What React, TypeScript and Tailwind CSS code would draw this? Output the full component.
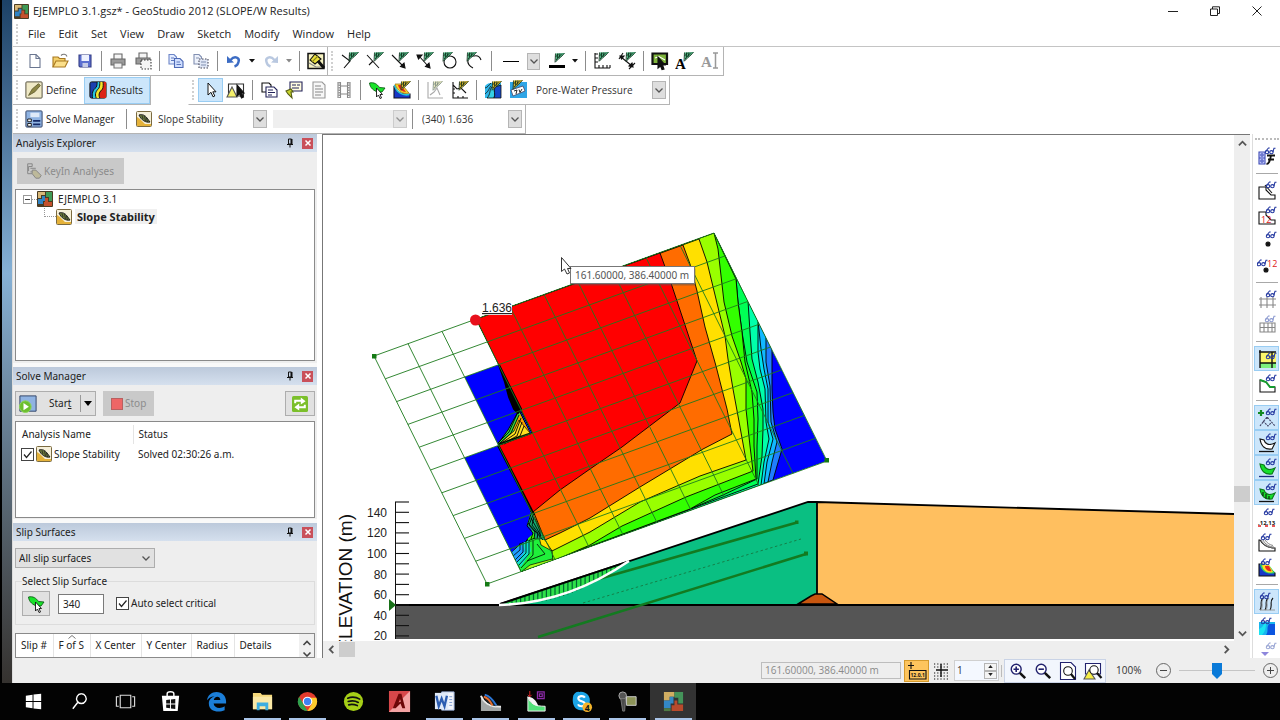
import React from "react";

type Pt = [number, number];
const pts = (list: Pt[]) => list.map((p) => p.join(",")).join(" ");

/* ---------- small drawing helpers ---------- */

function Icon({ children, size = "size-5" }: { children: React.ReactNode; size?: string }) {
  return (
    <svg viewBox="0 0 20 20" className={`${size} shrink-0`} fill="none" stroke="#111" strokeWidth="1.1" aria-hidden="true">
      {children}
    </svg>
  );
}

function Pen({ x = 8, y = 0, fill = "#4fb583" }: { x?: number; y?: number; fill?: string }) {
  return (
    <g transform={`translate(${x} ${y})`}>
      <path d="M1.5 1.5L11 1L8 4L5 6.5L1.5 10Z" fill={fill} stroke="none" />
      <path d="M1.5 1.5L1 10.5M1.5 10L5 6.5L8 4L10.5 1M3.5 1.5L3.5 6M6 1.5L5 5.5M1.5 5L5 1.5M2 8L8 1.5" stroke="#0c2a18" strokeWidth="0.8" />
    </g>
  );
}

function Glasses({ x = 9, y = 0, color = "#2438a0" }: { x?: number; y?: number; color?: string }) {
  return (
    <g transform={`translate(${x} ${y})`} stroke={color} strokeWidth="1.1" fill="none">
      <ellipse cx="2" cy="5.2" rx="1.7" ry="1.6" />
      <ellipse cx="6.4" cy="5.2" rx="1.7" ry="1.6" />
      <path d="M.5 4.5L3.5 1H4.700M7.900 5L9 1.200H10.500" />
    </g>
  );
}

function Pointer() {
  return <path d="M7 3V15L10 12.3L12 16.8L13.8 16L11.8 11.8H15Z" fill="#fff" strokeWidth="1" />;
}

function GeoLogo({ size = "size-4" }: { size?: string }) {
  return (
    <svg viewBox="0 0 16 16" className={`${size} shrink-0`} aria-hidden="true">
      <rect width="16" height="16" rx="1" fill="#4a3b22" />
      <path d="M1 1H8V4H4V7H1Z" fill="#d8b878" />
      <path d="M9 1H15V10H12V6H9Z" fill="#3f9a56" />
      <path d="M1 8H5V5H8V10H6V13H1Z" fill="#2f83c5" />
      <path d="M8 7H11V11H15V15H7V11H8Z" fill="#c4502c" />
    </svg>
  );
}

function SlopeIcon({ size = "size-4" }: { size?: string }) {
  return (
    <svg viewBox="0 0 16 16" className={`${size} shrink-0`} aria-hidden="true">
      <rect x=".5" y=".5" width="15" height="15" rx="1" fill="#f6f0da" stroke="#7a6a40" />
      <path d="M1 6L4 8L9 13H15V15H1Z" fill="#e5b23a" />
      <path d="M3 4C6 3 9 4 11 7L14 11C10 12 5 9 3 4Z" fill="#6b7a3c" stroke="#222" />
      <path d="M6 4.500L7 8M8.500 5L9.500 10M10.500 7L11.500 11" stroke="#1c1c1c" strokeWidth=".7" />
    </svg>
  );
}

function SlipFish() {
  return (
    <Icon>
      <path d="M2.500 3C7 2 10 4 12.500 7.500L18 8L15 12L11 12C7 11 3 8 2.500 3Z" fill="#19e32a" stroke="#0c5f16" strokeWidth=".9" />
      <path d="M9.500 8V17L11.500 15L13 18.500L14.500 18L13 14.500H15.500Z" fill="#fff" strokeWidth=".9" />
    </Icon>
  );
}

const Chevron = () => (
  <svg viewBox="0 0 10 10" className="size-2.5" fill="none" stroke="#555" strokeWidth="1.300" aria-hidden="true">
    <path d="M1.500 3.500L5 7L8.500 3.500" />
  </svg>
);

/* ---------- toolbar parts ---------- */

const Grip = () => <span className="mx-[3px] h-5 w-[3px] shrink-0 border-l-2 border-dotted border-[#d0d0d0]" />;
const Sep = () => (
  <span className="flex w-2 shrink-0 justify-center">
    <span className="h-5 w-px bg-[#8c8c8c]" />
  </span>
);

function Tool({ label, active, children }: { label: string; active?: boolean; children: React.ReactNode }) {
  return (
    <button
      type="button"
      aria-label={label}
      className={`flex h-6 w-[25px] shrink-0 items-center justify-center ${active ? "border border-[#99cdf3] bg-[#cce6fb]" : ""}`}
    >
      <Icon>{children}</Icon>
    </button>
  );
}

function More({ label, dim }: { label: string; dim?: boolean }) {
  return (
    <button type="button" aria-label={label} className="flex h-6 w-3 shrink-0 items-center justify-center">
      <svg viewBox="0 0 6 4" className="h-1 w-1.5" aria-hidden="true">
        <path d="M0 0H6L3 3.500Z" fill={dim ? "#888" : "#111"} />
      </svg>
    </button>
  );
}

function Combo({ label, value, className, disabled }: { label: string; value: string; className: string; disabled?: boolean }) {
  return (
    <span className={`relative flex h-[18px] shrink-0 items-center ${className} ${disabled ? "bg-[#efefef]" : ""}`}>
      <select
        aria-label={label}
        disabled={disabled}
        className="h-full w-full appearance-none bg-transparent pl-1.5 text-[10px] text-[#333] outline-none"
      >
        <option>{value}</option>
      </select>
      <span className={`pointer-events-none absolute right-0 top-0 flex h-[18px] w-3.5 items-center justify-center border border-[#b5b5b5] bg-[#dedede] ${disabled ? "opacity-60" : ""}`}>
        <Chevron />
      </span>
    </span>
  );
}

const bar = "flex h-[29px] items-center border-b border-r border-[#b4b4b4] bg-white";

function Toolbars() {
  return (
    <div className="flex flex-col items-start text-[10px]">
      <div className="flex">
        <div className={`${bar} w-[315px]`}>
          <Grip />
          <Tool label="New">
            <path d="M5 3.500H11L15 7.500V16.500H5Z" fill="#fff" stroke="#6a7690" />
            <path d="M11 3.500V7.500H15" stroke="#6a7690" />
          </Tool>
          <Tool label="Open">
            <path d="M3 16V6H8L9.500 7.500H15V10" fill="#f3d06b" stroke="#a87820" />
            <path d="M3 16L6 10H18L15 16Z" fill="#fbdf8a" stroke="#a87820" />
            <path d="M11 4.500C13 2.500 16 3 17 5.500" stroke="#777" />
          </Tool>
          <Tool label="Save">
            <path d="M4 4H16V16H5L4 15Z" fill="#5b6fd0" stroke="#353f86" />
            <path d="M6.500 4H14V10H6.500Z" fill="#eef2ff" stroke="none" />
            <path d="M7.500 12H13V16H7.500Z" fill="#c5cbe6" stroke="none" />
          </Tool>
          <Sep />
          <Tool label="Print">
            <path d="M6 8V3H14V8" fill="#f5f5f5" stroke="#666" />
            <path d="M3 8H17V14H3Z" fill="#9a9a9a" stroke="#666" />
            <path d="M6 12H14V17H6Z" fill="#f0f0f0" stroke="#777" />
          </Tool>
          <Tool label="Print area">
            <path d="M6 7V2H14V7" fill="#f5f5f5" stroke="#666" />
            <path d="M3 7H17V13H3Z" fill="#9a9a9a" stroke="#666" />
            <path d="M8 9H18V18H8Z" fill="#f4f4f4" stroke="#333" strokeDasharray="1.500 1.500" />
          </Tool>
          <Sep />
          <Tool label="Copy">
            <path d="M3 3.500H8L10.500 6V13H3Z" fill="#e3ecff" stroke="#6d86c8" />
            <path d="M8.500 7.500H14L17 10.500V16.500H8.500Z" fill="#cfdeff" stroke="#4d69b5" />
            <path d="M5 7H8M5 9.500H8M10.500 11H14M10.500 13.500H15" stroke="#5d77bd" />
          </Tool>
          <Tool label="Copy area">
            <path d="M3 3.500H8L10.500 6V13H3Z" fill="#eef2fb" stroke="#8290b2" />
            <path d="M8 8H17V17H8Z" fill="#dfe6f5" stroke="#445" strokeDasharray="1.500 1.500" />
            <path d="M5 7H8M10 11H15M10 14H15" stroke="#8290b2" />
          </Tool>
          <Sep />
          <Tool label="Undo">
            <path d="M6.500 9C11 4 16 7 14.500 11C14 13.500 12 15 10.500 15.500" stroke="#3c6cc4" strokeWidth="2.400" />
            <path d="M3 5V12L10 11.500Z" fill="#3c6cc4" stroke="none" />
          </Tool>
          <More label="Undo list" />
          <Tool label="Redo">
            <path d="M13.500 9C9 4 4 7 5.500 11C6 13.500 8 15 9.500 15.500" stroke="#b9c8e0" strokeWidth="2.400" />
            <path d="M17 5V12L10 11.500Z" fill="#b9c8e0" stroke="none" />
          </Tool>
          <More label="Redo list" dim />
          <Sep />
          <Tool label="Page setup">
            <path d="M2 2.500H18V17.500H2Z" fill="#f6f2c0" strokeWidth="1.500" />
            <path d="M3 12L10 16L16 16" stroke="#888" />
            <path d="M4 9L9 3L15 8L9 13Z" fill="#e9df3a" />
            <path d="M6 11L12 5" stroke="#8c861c" />
            <path d="M12 10L18 17" strokeWidth="3" />
          </Tool>
        </div>
        <div className={`${bar} pr-px`}>
          <Grip />
          <Tool label="Sketch lines"><path d="M2 4L10 10L4 17M10 10V4" /><Pen /></Tool>
          <Tool label="Sketch polyline"><path d="M2 4L14 17M8 10L4 14" /><Pen /></Tool>
          <Tool label="Sketch arrow"><path d="M2 4L13 15" /><path d="M15 17L10.500 15.500L14 12Z" fill="#111" /><Pen /></Tool>
          <Tool label="Sketch double arrow"><path d="M4 5L13 15" /><path d="M2 4L7 4L3.500 8ZM15 17L10.500 15.500L14 12Z" fill="#111" /><Pen /></Tool>
          <Tool label="Sketch circle"><circle cx="10" cy="11" r="6" /><Pen x={2} /></Tool>
          <Tool label="Sketch arc"><path d="M8 17C0 13 2 4 9 5C13 4 15 6 16 9" /><Pen x={1} /></Tool>
          <Sep />
          <span className="flex w-8 items-center justify-center"><span className="h-px w-4 bg-black" /></span>
          <button type="button" aria-label="Line style" className="flex h-[17px] w-[13px] items-center justify-center border border-[#b5b5b5] bg-[#dedede]"><Chevron /></button>
          <span className="w-1" />
          <Tool label="Line colour"><path d="M2 14H18V17H2Z" fill="#000" stroke="none" /><Pen x={7} y={1} /></Tool>
          <More label="Line colours" />
          <Sep />
          <Tool label="Sketch axes"><path d="M3 2V17H18M3 3H6M3 7H6M3 11H6M7 17V14M11 17V14M15 17V14M18 17V14" /><Pen x={6} /></Tool>
          <Tool label="Dimension"><path d="M4 6L15 15M2 8L6 2M12 18L18 12" /><path d="M3 5L7 5L4.500 8ZM16 16L12 15L15 12Z" fill="#111" /><Pen x={8} /></Tool>
          <Sep />
          <Tool label="Modify picture"><path d="M2.500 2.500H17V13H2.500Z" fill="#7fb53c" strokeWidth="2.200" /><path d="M5 7L9 5.500L15 9" stroke="#fff" /><path d="M8 6V17L10.500 15L12 18.500L14 18L12.500 14H15Z" fill="#111" /></Tool>
          <Tool label="Sketch text"><text x="0" y="18" fontSize="15" fontWeight="700" fill="#000" stroke="none" className="font-['Liberation_Serif',serif]">A</text><Pen /></Tool>
          <Tool label="Modify text"><text x="1" y="16" fontSize="15" fontWeight="700" fill="#999" stroke="none" className="font-['Liberation_Serif',serif]">A</text><path d="M13 2H18M15.500 2V17M13 17H18" stroke="#999" strokeWidth="1.500" /></Tool>
        </div>
      </div>

      <div className="flex">
        <div className={`${bar} w-[138px]`}>
          <Grip />
          <button type="button" className="flex h-6 w-[62px] items-center gap-[3px] pl-[3px]">
            <Icon size="size-[18px]">
              <rect x="1" y="1" width="18" height="18" rx="1" fill="#efe9c6" stroke="#55523f" />
              <path d="M4 16L8 9L15 3L17 5L11 12Z" fill="#8c8644" stroke="#6b6638" />
            </Icon>
            Define
          </button>
          <button type="button" className="flex h-[27px] w-[67px] items-center gap-[3px] border border-[#99cdf3] bg-[#cce6fb] pl-1">
            <Icon size="size-[18px]">
              <rect x="1" y="1" width="18" height="18" rx="2" fill="#1b3fb0" />
              <path d="M4 19C3 14 4 10 8 7C9 5 9 3 9 1H19V19Z" fill="#2ac7e0" stroke="none" />
              <path d="M8 19C6 14 8 11 11 8C12 6 12 3 12 1H19V19Z" fill="#f4e62a" stroke="none" />
              <path d="M12 19C10 14 12 12 15 9C16 7 16 3 15.500 1H19V19Z" fill="#dc2417" stroke="none" />
              <path d="M4 19C3 14 4 10 8 7C9 5 9 3 9 1M8 19C6 14 8 11 11 8C12 6 12 3 12 1M12 19C10 14 12 12 15 9C16 7 16 3 15.500 1" />
            </Icon>
            Results
          </button>
        </div>
        <span className="w-[37px]" />
        <div className={`${bar} border-l border-l-transparent`}>
          <Grip />
          <Tool label="Select" active><Pointer /></Tool>
          <Tool label="Select region"><path d="M2.500 4H17.500V16H2.500Z" fill="#fff" stroke="#333" /><path d="M1 17L6 7L11 17Z" fill="#f5f06a" stroke="#555" /><path d="M11 5V16L13.500 13.500L15.500 18L17.500 17L15.500 13H18Z" fill="#111" /></Tool>
          <Sep />
          <Tool label="Report"><path d="M3 3H10L12 5V12H3Z" fill="#fff" /><path d="M7 7H15L18 10V17H7Z" fill="#fff" stroke="#23235a" /><path d="M9 10H14M9 12.500H16M9 15H13" stroke="#23235a" /></Tool>
          <Tool label="View information"><path d="M6 2H18V11H6Z" fill="#fffbe0" stroke="#23235a" /><path d="M8 5H12M13 5H16M8 8H15" stroke="#23235a" /><path d="M2 11L7 9L9 12H7L8 18L4 14Z" fill="#c7d42f" stroke="#555c11" /></Tool>
          <Tool label="View summary"><path d="M4 2H13L16 5V18H4Z" fill="#f7f7f7" stroke="#999" /><path d="M6 6H12M6 9H14M6 12H14M6 15H12" stroke="#888" /></Tool>
          <Tool label="Animation"><path d="M4 2V18M16 2V18M6.500 2V18M13.500 2V18M6.500 6H13.500M6.500 14H13.500" stroke="#888" /><path d="M5.200 2V18M14.800 2V18" stroke="#999" strokeWidth="2" strokeDasharray="1.500 1" /></Tool>
          <Sep />
          <button type="button" aria-label="Select slip surface" className="flex h-6 w-[25px] items-center justify-center"><SlipFish /></button>
          <Tool label="Safety map"><path d="M2 6C4 13 9 15 18 14V18H2Z" fill="#1737c8" stroke="#112" /><path d="M2.500 5C4 12 10 16 17.500 14.500" stroke="#26c6d8" strokeWidth="1.600" /><path d="M3 4H9C12 6 14 10 17 13C10 15 5 10 3 4Z" fill="#f5d929" stroke="#a0761a" strokeWidth=".8" /><path d="M6 5H9L14 12C10 12 7 9 6 5Z" fill="#e82a1c" stroke="none" /><Pen x={8} fill="#d9b52c" /></Tool>
          <Sep />
          <Tool label="Graph"><path d="M3 2V18H18M5 15L9 12L12 8L15 15" stroke="#aaa" /><g opacity=".55"><Pen x={7} fill="#d8d890" /></g></Tool>
          <Tool label="Slice forces"><path d="M3 2V18H18M3 5L7 9L11 8L16 13" /><path d="M3 9H5M3 13H5M8 18V16M13 18V16" /><Pen x={8} fill="#d9b52c" /></Tool>
          <Sep />
          <Tool label="Contours"><path d="M2 6C5 2 8 3 18 3V18H2Z" fill="#2fb7ea" stroke="none" /><path d="M9 7C6 10 8 14 4 18H11C13 14 10 11 12 7Z" fill="#35d0e6" strokeWidth=".8" /><path d="M12 7C10 11 13 14 11 18H18V5Z" fill="#1348c8" strokeWidth=".8" /><path d="M2 8C4 8 6 5 8 3M2 14C6 11 6 8 8 6" strokeWidth=".8" /><Pen x={8} fill="#d9b52c" /></Tool>
          <Tool label="Contour labels"><path d="M2 2H19V18H2Z" fill="#2fa5e6" stroke="none" /><path d="M3 10L15 6L17 11L5 16Z" fill="#fff" stroke="#446" strokeWidth=".8" /><path d="M6 11L9 10L8 14M11 9.500L12 12.500L14 9" strokeWidth=".9" /><Pen x={4} y={-1} fill="#d9b52c" /></Tool>
          <Combo label="Contour parameter" value="Pore-Water Pressure" className="mr-[3px] w-[136px]" />
        </div>
      </div>

      <div className={`${bar}`}>
        <Grip />
        <button type="button" className="flex h-6 w-[100px] items-center gap-[3px] pl-[3px]">
          <Icon size="size-[18px]">
            <rect x="1" y="1" width="18" height="18" rx="1" fill="#8fb3e2" stroke="#36486b" />
            <path d="M3 10H7V13H3ZM3 15H7V18H3Z" fill="#fff" strokeWidth="1" />
            <path d="M9 12H17M9 16H17" stroke="#142a66" strokeWidth="2" />
            <path d="M6 3H16V8H6Z" fill="#dfeaf8" stroke="none" />
          </Icon>
          Solve Manager
        </button>
        <Sep />
        <span className="w-1.5" />
        <SlopeIcon />
        <Combo label="Analysis" value="Slope Stability" className="w-[115px]" />
        <span className="w-1.5" />
        <Combo label="Time step" value="" className="w-[134px]" disabled />
        <span className="w-px" />
        <Sep />
        <Combo label="Slip surface result" value="(340) 1.636" className="mr-[3px] w-[106px]" />
      </div>
    </div>
  );
}

/* ---------- left docked panels ---------- */

function PanelHeader({ title }: { title: string }) {
  return (
    <header className="flex h-[18px] shrink-0 items-center bg-linear-to-b from-[#bcc9db] to-[#d5e0ee] px-[3px] text-[#222]">
      <h2 className="flex-1">{title}</h2>
      <button type="button" aria-label={`Pin ${title}`} className="mr-2">
        <svg viewBox="0 0 8 10" className="h-2.5 w-2" fill="none" stroke="#111" aria-hidden="true">
          <path d="M2.500 1H5.500V6H2.500ZM1 6.500H7M4 6.500V9.500" /><path d="M5.500 1V6" strokeWidth="2" />
        </svg>
      </button>
      <button type="button" aria-label={`Close ${title}`} className="mr-px flex size-[11px] items-center justify-center bg-[#c9505a]">
        <svg viewBox="0 0 8 8" className="size-2" stroke="#fff" strokeWidth="1.500" aria-hidden="true"><path d="M1.500 1.500L6.500 6.500M6.500 1.500L1.500 6.500" /></svg>
      </button>
    </header>
  );
}

function Tick({ id, label }: { id: string; label?: string }) {
  return (
    <span className="relative inline-flex size-[13px] shrink-0">
      <input id={id} type="checkbox" defaultChecked aria-label={label} className="size-[13px] appearance-none border border-[#444] bg-white" />
      <svg viewBox="0 0 13 13" className="pointer-events-none absolute inset-0" fill="none" stroke="#222" strokeWidth="1.200" aria-hidden="true"><path d="M3 6.500L5.500 9.500L10.500 3.500" /></svg>
    </span>
  );
}

function Sidebar() {
  const cols: [string, string][] = [["Slip #", "w-[37px]"], ["F of S", "w-[37px]"], ["X Center", "w-[51px]"], ["Y Center", "w-[50px]"], ["Radius", "w-[43px]"], ["Details", "w-16"]];
  return (
    <aside className="flex w-[304px] shrink-0 flex-col bg-[#f9f9f9] font-['Noto_Sans',sans-serif] text-[10px] text-[#222]">
      <PanelHeader title="Analysis Explorer" />
      <section className="bg-[#eee] px-0.5 pb-0.5 pt-1.5">
        <button type="button" disabled className="ml-0.5 flex h-[26px] w-[107px] items-center gap-px bg-[#c9c9c9] pl-2 text-[#8c8c8c]">
          <Icon size="size-[18px]"><path d="M3 2H8V5H4V10M6 7H12M6 11H12M3 2V13H8" stroke="#888" /><path d="M8 9L12 9L18 15L16 18H12L8 13Z" fill="#bdb99a" stroke="#888" /></Icon>
          KeyIn Analyses
        </button>
        <ul className="mt-[5px] h-[172px] border border-[#8a8a8a] bg-white pl-[7px]">
          <li className="flex h-[18px] items-center">
            <span className="flex size-[9px] items-center justify-center border border-[#999]"><span className="h-px w-[5px] bg-[#444]" /></span>
            <span className="w-[5px] border-t border-dotted border-[#999]" />
            <GeoLogo />
            <span className="ml-[5px]">EJEMPLO 3.1</span>
          </li>
          <li className="ml-[21px] flex h-[17px] items-center">
            <span className="h-[17px] w-3 self-start"><span className="block h-[9px] border-b border-l border-dotted border-[#999]" /></span>
            <SlopeIcon />
            <strong className="ml-[3px] bg-[#f0f0f0] px-0.5 text-[11px] leading-[15px]">Slope Stability</strong>
          </li>
        </ul>
      </section>
      <span className="h-1" />

      <PanelHeader title="Solve Manager" />
      <section className="bg-[#eee] px-0.5 pb-px pt-1.5">
        <div className="flex items-center">
          <div className="flex h-[25px] w-[81px] items-center border border-[#adadad] bg-[#e1e1e1]">
            <button type="button" className="flex h-full w-16 items-center gap-3 pl-[3px]">
              <Icon size="size-[18px]"><path d="M1 1H19V18H1Z" fill="#8fb3e2" stroke="#36486b" /><circle cx="7" cy="13" r="6.500" fill="#6cbf2e" stroke="#8fd45a" /><path d="M5 9L11 13L5 17Z" fill="#fff" stroke="none" /></Icon>
              <span>Star<u>t</u></span>
            </button>
            <button type="button" aria-label="Start options" className="my-1 flex h-[17px] flex-1 items-center justify-center border-l border-[#999]"><svg viewBox="0 0 8 5" className="h-[5px] w-2" aria-hidden="true"><path d="M0 0H8L4 5Z" /></svg></button>
          </div>
          <button type="button" disabled className="ml-[7px] flex h-[25px] w-[51px] items-center gap-0.5 bg-[#c9c9c9] pl-2 text-[#8c8c8c]">
            <span className="size-3 border border-[#b86060] bg-[#ee6666]" />
            Stop
          </button>
          <button type="button" aria-label="Refresh" className="ml-auto flex h-[25px] w-[30px] items-center justify-center border border-[#adadad] bg-[#e1e1e1]">
            <Icon size="size-4"><rect width="20" height="20" rx="2" fill="#7bbf2a" stroke="none" /><path d="M4 9V6H13M16 11V14H7" stroke="#fff" strokeWidth="2.500" /><path d="M11 2L17 6.500L11 10.500ZM9 9.500L3 14L9 18Z" fill="#fff" stroke="none" /></Icon>
          </button>
        </div>
        <div className="mt-[5px] h-[97px] border border-[#8a8a8a] bg-white px-[5px] pt-[3px]">
          <table className="w-full table-fixed text-left">
            <thead>
              <tr className="h-[19px]">
                <th className="w-[112px] border-r border-[#e4e4e4] pl-px font-normal">Analysis Name</th>
                <th className="pl-[5px] font-normal">Status</th>
              </tr>
            </thead>
            <tbody>
              <tr className="h-5">
                <td className="-ml-px"><span className="flex items-center gap-[2px]"><Tick id="solve-slope" label="Solve Slope Stability" /><SlopeIcon />Slope Stability</span></td>
                <td className="pl-[5px]">Solved 02:30:26 a.m.</td>
              </tr>
            </tbody>
          </table>
        </div>
      </section>
      <span className="h-1" />

      <PanelHeader title="Slip Surfaces" />
      <section className="flex min-h-0 flex-1 flex-col overflow-hidden bg-[#eee] px-0.5 pt-[7px]">
        <span className="relative block h-5 w-[140px] shrink-0 border border-[#adadad] bg-[#e1e1e1]">
          <select aria-label="Slip surface filter" className="h-full w-full appearance-none bg-transparent pl-[3px] outline-none"><option>All slip surfaces</option></select>
          <span className="pointer-events-none absolute right-[3px] top-1"><Chevron /></span>
        </span>
        <fieldset className="mt-[5px] h-[52px] shrink-0 border border-[#dcdcdc] px-1.5">
          <legend className="bg-[#eee] leading-4">Select Slip Surface</legend>
          <div className="flex items-center pt-0.5">
            <button type="button" aria-label="Pick slip surface" className="flex h-[25px] w-7 items-center justify-center border border-[#adadad] bg-[#e1e1e1]"><SlipFish /></button>
            <input aria-label="Slip surface number" defaultValue="340" className="ml-2 h-5 w-[46px] border border-[#7a7a7a] bg-white pl-1 outline-none" />
            <span className="ml-3 flex items-center gap-0.5"><Tick id="auto" /><label htmlFor="auto">Auto select critical</label></span>
          </div>
        </fieldset>
        <div className="mt-2 flex min-h-0 flex-1 border border-[#8a8a8a] bg-white">
          <table className="h-full text-left">
            <thead>
              <tr>
                {cols.map(([c, w]) => (
                  <th key={c} className={`${w} relative whitespace-nowrap border-r border-[#e4e4e4] p-0 pl-[5px] font-normal last:border-0`}>
                    {c === "F of S" && <svg viewBox="0 0 8 4" className="absolute left-[14px] top-px h-1 w-2" fill="none" stroke="#777" aria-hidden="true"><path d="M.500 3.500L4 .500L7.500 3.500" /></svg>}
                    {c}
                  </th>
                ))}
              </tr>
            </thead>
          </table>
          <div className="ml-auto flex w-[15px] flex-col items-center justify-between bg-[#f0f0f0]">
            <svg viewBox="0 0 10 10" className="mt-1 size-2.5" fill="none" stroke="#444" strokeWidth="1.600" aria-hidden="true"><path d="M1.500 7L5 3.500L8.500 7" /></svg>
            <svg viewBox="0 0 10 6" className="h-1.5 w-2.5" fill="none" stroke="#444" strokeWidth="1.600" aria-hidden="true"><path d="M1.500 1.500L5 5L8.500 1.500" /></svg>
          </div>
        </div>
      </section>
    </aside>
  );
}

/* ---------- slope model drawing ---------- */

// Search grid: i runs along the top edge, j runs down the slope.
const g = (i: number, j: number): Pt => [374 + 34 * i + 11.3 * j, 357 - 12.3 * i + 22.8 * j];

const leftEdge: Pt[] = [g(2, 5), g(3, 5), g(3, 0)];
const peak = g(10, 0);

const contours: { fill: string; line: Pt[] }[] = [
  { fill: "#1f7dff", line: [peak, [772, 350], [772, 390], [773, 413], [775, 430], [782, 450], [777, 467], [773, 481], [521, 573]] },
  { fill: "#11b8ff", line: [peak, [766, 338], [766, 363], [770, 387], [771, 423], [777, 443], [772, 463], [768, 483], [521, 573]] },
  { fill: "#00e0ee", line: [peak, [758, 322], [761, 350], [764, 370], [768, 390], [768, 423], [773, 440], [767, 463], [764, 485], [521, 573]] },
  { fill: "#00ffaa", line: [peak, [758, 322], [758, 353], [760, 370], [765, 390], [766, 423], [769, 440], [764, 463], [761, 486], [521, 573]] },
  { fill: "#00ff55", line: [peak, [748, 302], [750, 333], [752, 360], [758, 383], [763, 410], [763, 430], [762, 457], [758, 485], [521, 573]] },
  { fill: "#1dff22", line: [peak, [736, 280], [738, 303], [742, 333], [747, 363], [757, 393], [758, 420], [757, 447], [757, 480], [723, 496], [690, 510], [521, 573]] },
  { fill: "#33ff00", line: [peak, [736, 280], [738, 303], [742, 333], [745, 363], [752, 393], [754, 420], [754, 447], [756, 480], [715, 496], [690, 510], [521, 573]] },
  { fill: "#99ff00", line: [peak, [718, 250], [724, 303], [732, 337], [741, 363], [746, 380], [746, 410], [750, 447], [753, 472], [686, 498], [622, 527], [590, 546], [553, 562]] },
  { fill: "#ffe000", line: [[699, 240], [707, 263], [716, 300], [725, 337], [728, 360], [733, 390], [738, 417], [746, 461], [700, 477], [640, 503], [590, 533], [552, 552], [543, 543]] },
  { fill: "#ff6c00", line: [[683, 246], [690, 265], [697, 292], [705, 328], [716, 367], [727, 410], [732, 435], [703, 450], [640, 488], [590, 519], [560, 534], [545, 541]] },
  { fill: "#ff0000", line: [[660, 254], [672, 287], [684, 323], [697, 362], [680, 404], [622, 448], [590, 470], [560, 491], [533, 513]] },
];

function ModelView() {
  const outline: Pt[] = [g(3, 0), g(10, 0), g(10, 10), g(1, 10), g(1, 5), g(2, 5), g(2, 2), g(3, 2)];
  const steps = Array.from({ length: 11 }, (_, k) => k);
  const ticks = Array.from({ length: 14 }, (_, k) => 150 - 10 * k);
  const yOf = (elev: number) => 503 + (150 - elev) * 1.03;
  const slices = Array.from({ length: 26 }, (_, k) => 512 + k * 4.300);
  return (
    <svg viewBox="323 136 911 504" preserveAspectRatio="xMinYMin meet" className="block h-full w-full bg-white font-['Liberation_Sans',sans-serif]" role="img" aria-label="Slope model with factor of safety contours">
      <defs>
        <clipPath id="mapped"><polygon points={pts(outline)} /></clipPath>
      </defs>

      <g clipPath="url(#mapped)">
        <polygon points={pts(outline)} fill="#0000ff" />
        {contours.map(({ fill, line }) => (
          <polygon key={fill} points={pts([...line, g(2, 8), ...leftEdge])} fill={fill} stroke="#000" strokeWidth="0.9" />
        ))}
        <polygon points={pts([g(2, 2), g(3, 2), [510, 398], [512, 408], [509, 424], [497, 443]])} fill="#0000ff" />
        <polygon points={pts([g(1, 5), g(2, 5), [530, 510], [528, 520], [533, 535], [512, 553]])} fill="#0000ff" />
        <polygon points={pts([[530, 434], [519, 411], [508, 431], [497, 446]])} fill="#33e040" stroke="#000" />
        <polygon points={pts([[530, 434], [520, 415], [513, 431]])} fill="#ff9a00" />
        <polygon points={pts([[530, 434], [519, 421], [514, 432], [500, 444]])} fill="#ffdf20" stroke="#000" strokeWidth=".7" />
        <path d="M518 413L509 433L498 444M519 416L511 434L499 445M521 419L515 435L500 445M522 423L517 437L502 445M524 427L520 437L504 445" fill="none" stroke="#000" strokeWidth="0.9" />
        <path d="M499 366L505 383L509 398L514 410L518 414L521 410Z" fill="#000" stroke="#000" strokeWidth="2" />
        <path d="M498 446L534 516" stroke="#000" strokeWidth="2.500" />
        <polygon points={pts([[512, 553], [520, 545], [535, 539], [543, 541], [552, 552], [553, 562], [521, 573]])} fill="#1ff03a" stroke="#000" strokeWidth=".8" />
        <polygon points={pts([[512, 553], [524, 543], [527, 544], [524, 555], [517, 566]])} fill="#1f9dff" />
        <polygon points={pts([[522, 545], [529, 541], [531, 552], [521, 568], [517, 564], [525, 552]])} fill="#10e0c8" />
        <polygon points={pts([[521, 573], [530, 566], [552, 560], [553, 562]])} fill="#a8ff18" stroke="#000" strokeWidth=".7" />
        <polygon points={pts([[539, 538], [545, 541], [552, 552], [541, 546]])} fill="#ffe000" stroke="#000" strokeWidth=".7" />
        <path d="M520 544V551L513 557M523 543V553L515 561M526 542V554L517 563M529 541V555L519 566M533 541V556L521 569M537 545L545 555L527 562" fill="none" stroke="#000" strokeWidth="0.8" />
        <polygon points={pts([[531, 512], [534, 517], [545, 541], [536, 540], [533, 532], [527, 526]])} fill="#14a870" />
        <path d="M532 512L527 527L533 534L531 540M533 516L529 526L535 533L534 540M534 518L532 526L538 534L537 540M535 520L540 532L540 540M531 519L541 537M528 524L543 541M534 514L545 541" fill="none" stroke="#000" strokeWidth="0.9" />
      </g>

      <g stroke="#1d7a1d" strokeWidth="0.9">
        {steps.map((k) => {
          const [x1, y1] = g(k, 0), [x2, y2] = g(k, 10), [x3, y3] = g(0, k), [x4, y4] = g(10, k);
          return (
            <g key={k}>
              <line x1={x1} y1={y1} x2={x2} y2={y2} />
              <line x1={x3} y1={y3} x2={x4} y2={y4} />
            </g>
          );
        })}
      </g>
      <g fill="#157a15">
        <rect x="372" y="355" width="4.500" height="4.500" />
        <rect x="485" y="583" width="4.500" height="4.500" />
        <rect x="824.500" y="459" width="4.500" height="4.500" />
      </g>

      {/* ground and embankment */}
      <rect x="395" y="606" width="839" height="34" fill="#555" />
      <polygon points="500,605 808,503 817,503 817,605" fill="#0abf82" />
      <polygon points="817,503 1234,515 1234,605 817,605" fill="#ffbf5f" />
      <path d="M500 605L808 503H817L1234 515M817 503V605" fill="none" stroke="#000" strokeWidth="1.800" />
      <polygon points="798,605 811,597 815,595 822,595 837,605" fill="#c8560f" stroke="#000" strokeWidth="1.500" />
      <path d="M395 606H1234" stroke="#000" strokeWidth="2" />
      <path d="M538 638L806 555M560 591L797 523.500" stroke="#137a20" strokeWidth="2.600" />
      <rect x="804" y="552.500" width="4" height="4" fill="#137a20" />
      <rect x="795" y="521.500" width="3.500" height="3.500" fill="#137a20" />
      <path d="M583 604L801 540" stroke="#158048" strokeDasharray="2.500 2.500" />
      <path d="M500 605L628 562.600C600 580 570 595 540 602Z" fill="#2ee04a" />
      {slices.map((x) => {
        const top = 605 - ((x - 500) * 102) / 308;
        const depth = 13 * Math.sin(((x - 500) / 128) * Math.PI);
        return <line key={x} x1={x} y1={top} x2={x} y2={top + depth} stroke="#063" strokeWidth="1.200" />;
      })}
      <path d="M500 605L628 562.600" stroke="#000" strokeWidth="2" />
      <path d="M499 606C545 605 588 590 629 562" fill="none" stroke="#fff" strokeWidth="2.600" />

      {/* elevation axis */}
      <path d="M395.500 503V640" stroke="#111" />
      {ticks.map((e) => (
        <g key={e}>
          <path d={`M395 ${yOf(e)}H409`} stroke="#111" strokeWidth="1.100" />
          {e % 20 === 0 && <text x="387" y={yOf(e) + 4.500} textAnchor="end" fontSize="12" fill="#222">{e}</text>}
        </g>
      ))}
      <path d="M389 600L396 606L389 612Z" fill="#187018" />
      <text transform="translate(352 515) rotate(-90)" textAnchor="end" fontSize="19" fill="#111">ELEVATION (m)</text>

      {/* critical centre and coordinate tip */}
      <rect x="481" y="301" width="31" height="15" fill="#fff" />
      <circle cx="475.500" cy="321" r="5.500" fill="#e8101c" />
      <text x="482" y="313" fontSize="12" fill="#222" textDecoration="underline">1.636</text>
      <rect x="572.500" y="269.500" width="123" height="17" fill="#555" opacity=".5" />
      <rect x="570.500" y="267.500" width="124" height="17" fill="#fff" stroke="#777" />
      <text x="575" y="280" fontSize="10" fill="#555" className="font-['Noto_Sans',sans-serif]">161.60000, 386.40000 m</text>
      <path d="M561.500 258.500V272.500L564.500 270L567 275L569.500 274L567.500 269.500H571Z" fill="#fff" stroke="#333" />
    </svg>
  );
}

function Arrow({ d, label, className }: { d: string; label: string; className: string }) {
  return (
    <button type="button" aria-label={label} className={`flex items-center justify-center ${className}`}>
      <svg viewBox="0 0 10 10" className="size-[9px]" fill="none" stroke="#555" strokeWidth="2" aria-hidden="true"><path d={d} /></svg>
    </button>
  );
}

function Viewport() {
  return (
    <main className="ml-[5px] mr-0.5 grid min-w-0 flex-1 grid-cols-[1fr_16px] grid-rows-[1fr_17px] border-l border-t border-[#777] bg-[#eee]">
      <div className="min-h-0 min-w-0 overflow-hidden"><ModelView /></div>
      <div className="flex flex-col justify-between">
        <Arrow label="Scroll up" d="M1 7L5 3L9 7" className="h-4" />
        <span className="mb-[123px] mt-auto h-4 bg-[#cdcdcd]" />
        <Arrow label="Scroll down" d="M1 3L5 7L9 3" className="h-4" />
      </div>
      <div className="flex">
        <Arrow label="Scroll left" d="M7 1L3 5L7 9" className="w-4" />
        <span className="my-px w-4 bg-[#cdcdcd]" />
        <Arrow label="Scroll right" d="M3 1L7 5L3 9" className="ml-auto w-4" />
      </div>
    </main>
  );
}

/* ---------- right view toolbar ---------- */

const slopeBase = "M2 6V18H18V14H14L9 9V6Z";
const bowl = "M3 6C4 13 8 17 15 16L18 10C12 13 8 11 7 7Z";

const viewGroups: { label: string; on?: boolean; art: React.ReactNode }[][] = [
  [{ label: "Fonts", art: <><path d="M2 5H8V17H2ZM2 11H8" stroke="#3c49b5" fill="#ccd2ff" /><circle cx="5" cy="8" r="1.200" stroke="#3c49b5" /><circle cx="5" cy="14" r="1.200" stroke="#3c49b5" /><path d="M10 8.500H18M14 8.500C13 13 12.500 17 9.500 17M11 12.500H17" strokeWidth="1.800" /><Glasses x={8} /></> }],
  [
    { label: "Regions", art: <><path d={slopeBase} fill="#fff" /><path d="M8 4L15 12" /><Glasses /></> },
    { label: "Region numbers", art: <><path d={slopeBase} fill="#fff" /><text x="4" y="17" fontSize="9" fill="#e02020" stroke="none">12</text><Glasses /></> },
    { label: "Points", art: <><circle cx="11" cy="13" r="2" fill="#111" /><Glasses /></> },
    { label: "Point numbers", art: <><circle cx="9" cy="14" r="2" fill="#111" /><text x="10" y="11" fontSize="9" fill="#e02020" stroke="none">12</text><Glasses x={0} y={3} /></> },
  ],
  [
    { label: "Mesh", art: <><path d="M2 9H19M2 15H19M4 7V18M10 7V18M16 7V18" stroke="#888" /><Glasses /></> },
    { label: "Mesh numbers", art: <><path d="M3 8H18V17H3ZM3 12.500H18M7 8V17M11 8V17M15 8V17" stroke="#888" /><Glasses x={8} color="#8c9ad0" /></> },
  ],
  [
    { label: "Axes", on: true, art: <><path d="M3 3H19V14H3Z" fill="#fbf66a" stroke="none" /><path d="M3 14H19V19H3Z" fill="#7df07d" stroke="none" /><path d="M2 3H19M3 1V19M15 3V19M3 14H19" strokeWidth="1.400" /><Glasses y={3} /></> },
    { label: "Surface layers", art: <><path d="M3 6V18H18V13H13L9 8L3 6Z" fill="#fff" /><path d="M3 6L9 8L13 13H18" stroke="#159b2f" strokeWidth="2" /><Glasses /></> },
  ],
  [
    { label: "Slip grid", on: true, art: <><path d="M3 18L10 9L18 18M6 13L11 18L15 14M10 9V12" stroke="#446" strokeDasharray="2 1" /><path d="M4 2V8M1 5H7" stroke="#128a22" strokeWidth="2.200" /><Glasses /></> },
    { label: "Slip surface", on: true, art: <><path d={bowl} fill="#fff" /><path d="M2 18.500H17" strokeWidth="1.300" /><Glasses /></> },
    { label: "Slip mass", on: true, art: <><path d={bowl} fill="#17df2c" stroke="#0b7a18" /><path d="M2 18.500H17" stroke="#1b2a80" strokeWidth="1.300" /><Glasses /></> },
    { label: "Slices", on: true, art: <><path d={bowl} fill="#17df2c" stroke="#0b7a18" /><path d="M6 9V13M9 11V15.500M12 13V16" /><path d="M2 18.500H17" strokeWidth="1.300" /><Glasses /></> },
    { label: "Slice numbers", art: <><text x="1" y="17" fontSize="6" fontWeight="700" fill="#222" stroke="none">.12.13</text><path d="M1 18H4M8 18H11M15 18H18" stroke="#e02020" strokeWidth="1.500" /><Glasses x={7} /></> },
    { label: "All slip surfaces", art: <><path d="M2 7V18H18V15C10 15 6 12 3 7Z" fill="#fff" /><path d="M4 7C7 12 11 15 18 15M6 7C8 11 12 14 17 14M8 7C10 10 13 12 16 12.500" stroke="#777" strokeWidth=".9" /><Glasses x={4} /></> },
    { label: "Safety map", art: <><path d="M2 6V18H18V15L6 6Z" fill="#1737c8" /><path d="M3 6C4 14 11 17 18 15L12 7Z" fill="#2fd36a" stroke="none" /><path d="M5 7C6 13 11 16 16 14L12 7Z" fill="#ffdf20" stroke="none" /><path d="M8 8C8 11 11 14 14.500 13L12 8Z" fill="#e82a1c" stroke="none" /><Glasses x={4} /></> },
  ],
  [
    { label: "Contour lines", on: true, art: <><path d="M6 6C2 10 6 13 3 18M11 6C7 10 11 13 8 18M16 6C12 10 16 13 13 18" /><path d="M4 18C7 13 3 10 7 6M9 18C12 13 8 10 12 6M3 18H18" stroke="#888" strokeWidth=".8" /><Glasses x={3} /></> },
    { label: "Contour shading", art: <><path d="M2 5H18V18H2Z" fill="#19b5ee" stroke="none" /><path d="M12 7H18V18H9C12 14 9 11 12 7Z" fill="#0b55e0" stroke="none" /><path d="M2 12C6 10 6 9 7 6H9C9 11 8 15 5 18H2Z" fill="#1be4f0" stroke="none" /><Glasses x={4} /></> },
    { label: "Water table", art: <><path d="M4 10H12L8 14Z" fill="#8d86dc" stroke="none" /><path d="M3 17H14" stroke="#8d86dc" /><Glasses color="#9aa6d4" /></> },
  ],
];

function ViewBar() {
  return (
    <nav aria-label="View preferences" className="flex w-[28px] shrink-0 flex-col items-center overflow-hidden border-l border-[#ddd] bg-white pt-1">
      <span className="mb-1 w-6 border-t-2 border-dotted border-[#bbb]" />
      {viewGroups.map((group, n) => (
        <React.Fragment key={n}>
          {n > 0 && <span className="my-1 h-px w-[22px] shrink-0 bg-[#a8a8a8]" />}
          {group.map((b) => (
            <button key={b.label} type="button" aria-label={b.label} className={`flex h-[25px] w-[25px] shrink-0 items-center justify-center ${b.on ? "border border-[#99cdf3] bg-[#cce6fb]" : ""}`}>
              <Icon>{b.art}</Icon>
            </button>
          ))}
        </React.Fragment>
      ))}
    </nav>
  );
}

/* ---------- status bar ---------- */

function Magnifier({ inner }: { inner?: React.ReactNode }) {
  return (
    <Icon size="size-[18px]">
      <circle cx="8" cy="8" r="5.500" fill="#fff" stroke="#22226e" strokeWidth="1.600" />
      {inner}
      <path d="M12 12L18 18" strokeWidth="2.800" />
    </Icon>
  );
}

function StatusBar() {
  const btn = "flex h-[22px] w-[25px] items-center justify-center";
  const step = "flex h-2 w-[13px] items-center justify-center border border-[#b5b5b5] bg-[#f4f4f4]";
  return (
    <footer className="flex h-[25px] shrink-0 items-center justify-end bg-[#eee] text-[10px] text-[#333]">
      <output className="mr-[3px] h-[17px] w-[140px] border border-[#bdbdbd] pl-[3px] leading-[15px] text-[#8a8a8a]">161.60000, 386.40000 m</output>
      <button type="button" aria-label="Show coordinates" className={`${btn} border border-[#d59a2c] bg-[#fdc45d]`}>
        <Icon><path d="M4 1V8M1 4.500H7" /><path d="M2.500 9.500H19V18H2.500Z" /><text x="3.500" y="16" fontSize="5" fontWeight="700" fill="#111" stroke="none">12.0,1</text></Icon>
      </button>
      <button type="button" aria-label="Snap grid" className={btn}>
        <Icon><path d="M2 3H18M2 6H18M2 12H18M2 15H18M2 18H18" strokeDasharray="1.200 2" /><path d="M9 3V16M4 9H16" strokeWidth="1.400" /></Icon>
      </button>
      <span className="flex h-[21px] w-[45px] items-center border border-[#d0d0d0] bg-[#f4f8ff]">
        <input aria-label="Grid scale" defaultValue="1" className="w-[29px] min-w-0 bg-transparent pl-0.5 outline-none" />
        <span className="flex flex-col">
          <button type="button" aria-label="Raise grid scale" className={step}><svg viewBox="0 0 6 4" className="h-[3px] w-[5px]" aria-hidden="true"><path d="M0 4H6L3 0Z" fill="#222" /></svg></button>
          <button type="button" aria-label="Lower grid scale" className={step}><svg viewBox="0 0 6 4" className="h-[3px] w-[5px]" aria-hidden="true"><path d="M0 0H6L3 4Z" fill="#222" /></svg></button>
        </span>
      </span>
      <span className="mx-0.5 h-3 w-px bg-[#bbb]" />
      <span className="flex border border-[#c9d3e6] bg-[#f2f6fd]">
        <button type="button" aria-label="Zoom in" className={btn}><Magnifier inner={<path d="M8 5V11M5 8H11" stroke="#22226e" strokeWidth="1.800" />} /></button>
        <button type="button" aria-label="Zoom out" className={btn}><Magnifier inner={<path d="M5 8H11" stroke="#22226e" strokeWidth="1.800" />} /></button>
        <button type="button" aria-label="Zoom page" className={btn}><Icon><path d="M2.500 1.500H13L17.500 6V18.500H2.500Z" fill="#fff" stroke="#22226e" /><circle cx="10" cy="10" r="4.300" fill="#fff" /><path d="M13 13L17 18" strokeWidth="2.200" /></Icon></button>
        <button type="button" aria-label="Zoom objects" className={btn}><Icon><path d="M2.500 2.500H17.500V13H2.500Z" fill="#fff" stroke="#22226e" /><path d="M1 18L6 9L12 18Z" fill="#f6ee45" stroke="#555" /><circle cx="11" cy="9" r="4.200" fill="#fff" /><path d="M14 12L18.500 17" strokeWidth="2.200" /></Icon></button>
      </span>
      <span className="w-9 pl-2.5">100%</span>
      <button type="button" aria-label="Decrease zoom" className="ml-3.5 flex size-[15px] items-center justify-center rounded-full border border-[#666]"><span className="h-px w-[7px] bg-[#444]" /></button>
      <span className="relative ml-2 flex h-4 w-[76px] items-center">
        <span className="h-px w-full bg-[#c5c5c5]" />
        <svg viewBox="0 0 10 16" className="absolute left-[33px] top-0 h-4 w-2.5" aria-hidden="true"><path d="M0 0H10V11L5 16L0 11Z" fill="#0a7ad8" /></svg>
        <input type="range" aria-label="Zoom" defaultValue="50" className="absolute inset-0 w-full opacity-0" />
      </span>
      <button type="button" aria-label="Increase zoom" className="ml-2 mr-0.5 flex size-[15px] items-center justify-center rounded-full border border-[#666]">
        <svg viewBox="0 0 7 7" className="size-[7px]" stroke="#444" aria-hidden="true"><path d="M3.500 0V7M0 3.500H7" /></svg>
      </button>
    </footer>
  );
}

/* ---------- taskbar ---------- */

const apps: { label: string; open?: boolean; current?: boolean; art: React.ReactNode }[] = [
  { label: "Start", art: <path d="M4 6L11 5V11.500H4ZM12 4.800L20 3.800V11.500H12ZM4 12.500H11V19L4 18ZM12 12.500H20V20.200L12 19.200Z" fill="#fff" /> },
  { label: "Search", art: <path d="M14 4A5 5 0 1 1 13.900 4M10.500 12.500L5 19.500" fill="none" stroke="#fff" strokeWidth="1.500" /> },
  { label: "Task view", art: <path d="M6.500 5.500H17.500V18.500H6.500ZM5 7H2.500V17H5M19 7H21.500V17H19" fill="none" stroke="#ddd" strokeWidth="1.200" /> },
  { label: "Store", art: <><path d="M3 6H21L19.500 22H4.500Z" fill="#fff" /><path d="M8.500 8V4C8.500 1 15.500 1 15.500 4V8" fill="none" stroke="#fff" strokeWidth="1.500" /><path d="M7.500 10.500L11.500 10V14H7.500ZM12.500 9.800L17 9.300V14H12.500ZM7.500 15H11.500V19L7.500 18.500ZM12.500 15H17V19.700L12.500 19.200Z" fill="#111" /></> },
  { label: "Edge", art: <path d="M2 11C3 5 7 2 12 2C18 2 22 6 22 12V14H9C9.500 19 16 20 20.500 17V21C14 24 4 22.500 4 14C4 10 7 7.500 10 6.500C5.500 7 3.500 9 2 11ZM9.200 10.500H16C16 5.500 9.500 6 9.200 10.500Z" fill="#1b7ed8" fillRule="evenodd" /> },
  { label: "File Explorer", open: true, art: <><path d="M2 3H10L11.500 5H22V20H2Z" fill="#f6d97b" /><path d="M2 7H22V20H2Z" fill="#fbe9a6" /><path d="M6 13H18V21H15V17H9V21H6Z" fill="#3daee0" /></> },
  { label: "Chrome", open: true, art: <><circle cx="12" cy="12" r="10" fill="#e33b2e" /><path d="M3.300 7L8 15L12 22A10 10 0 0 1 3.300 7Z" fill="#2da14d" /><path d="M12 22L16.500 14.500L14 8H21.200A10 10 0 0 1 12 22Z" fill="#fccb2d" /><circle cx="12" cy="12" r="5" fill="#fff" /><circle cx="12" cy="12" r="3.800" fill="#3f82f2" /></> },
  { label: "Spotify", art: <><circle cx="12" cy="12" r="10" fill="#a6cf17" /><path d="M6 8.500C10 7 15 7.500 18.500 9.500M6.500 12C10 11 14 11.300 17 13M7 15.500C10 14.500 13 15 16 16.300" fill="none" stroke="#111" strokeWidth="1.700" strokeLinecap="round" /></> },
  { label: "AutoCAD", art: <><rect x="1" y="1" width="22" height="22" fill="#d8474a" /><path d="M1 23L23 1V23Z" fill="#f4a3a3" /><path d="M5 19L11 4H14L18 19H15L13 14L8 19ZM11 13L12.500 9L13.500 12Z" fill="#6d0808" fillRule="evenodd" /></> },
  { label: "Word", open: true, art: <><path d="M9 2H22V21H9Z" fill="#f3f6fb" stroke="#9fb5dc" /><path d="M17 7H20M17 10H20M17 13H20M17 16H20" stroke="#7d9bd2" /><path d="M2 3H16V20H2Z" fill="#dfe9f8" /><path d="M3.500 6L6 17L9 9L12 17L14.500 6" fill="none" stroke="#2b5cb0" strokeWidth="2.400" /></> },
  { label: "Slope model", open: true, art: <><path d="M2 7C5 15 12 18 23 18V22H2Z" fill="#a2a6a6" /><path d="M2 6C5 14 12 18 23 17.500" stroke="#e9e9e9" strokeWidth="2" fill="none" /><path d="M5 6C9 7 15 12 18 17C11 16 6 12 5 6Z" fill="#222" /><path d="M6 5C11 6 15 11 18 16" stroke="#2b76d6" strokeWidth="2" fill="none" /><path d="M5 7C9 8 12 12 14 16" stroke="#e86d2e" strokeWidth="2" fill="none" /></> },
  { label: "Sigma model", open: true, art: <><path d="M3 7C5 14 10 17 21 17V22H3Z" fill="#53e27a" stroke="#eee" /><path d="M3 7C8 7 12 11 14 17C9 16 5 13 3 7Z" fill="#f4f4f4" /><path d="M5 1V7L3 5M5 7L7 5" stroke="#e02525" fill="none" /><path d="M13 2H20V9H13ZM15 4H18V7H15Z" stroke="#8c2ba8" fill="none" strokeWidth="1.300" /></> },
  { label: "Skype", open: true, art: <><path d="M3 8A6 6 0 0 1 10 2C17 1 22 7 20.500 13A6 6 0 0 1 13 21C6 22 2 16 3 8Z" fill="#1ba4e6" /><path d="M15.500 8C14 5.500 8.500 6 8.700 9C9 12.500 15.500 11 15.500 14.500C15.300 18 9.500 17.500 8.300 15" fill="none" stroke="#fff" strokeWidth="2.200" /><circle cx="18" cy="18" r="5" fill="#f5b52b" /><text x="15.500" y="21.500" fontSize="9" fontWeight="700" fill="#111">4</text></> },
  { label: "Recorder", open: true, art: <><circle cx="7" cy="6" r="4" fill="#555" stroke="#aaa" /><path d="M5 9H10L9 22H7Z" fill="#4a4a4a" stroke="#777" /><path d="M11 7H21V16H11Z" fill="#8c9358" stroke="#ccc" /></> },
  { label: "GeoStudio", open: true, current: true, art: <><path d="M2 2H13V7H8V11H2Z" fill="#d0ad62" /><path d="M13 2H22V14H17V8H13Z" fill="#44945a" /><path d="M2 11H8V7H12V14H9V19H2Z" fill="#3387c4" /><path d="M13 11H16V15H22V22H10V16H13Z" fill="#b84a2c" /><path d="M2 19H9V22H2Z" fill="#4f7a45" /></> },
];

function Taskbar() {
  return (
    <nav aria-label="Taskbar" className="flex h-[37px] shrink-0 bg-[#030303] pl-[11px]">
      <div className="flex w-[685px]">
        {apps.map((a) => (
          <button key={a.label} type="button" aria-label={a.label} className={`flex flex-1 flex-col items-center justify-between pt-[7px] ${a.current ? "bg-[#333]" : ""}`}>
            <svg viewBox="0 0 24 24" className="size-[23px]" aria-hidden="true">{a.art}</svg>
            <span className={`h-0.5 w-[37px] ${a.open ? "bg-[#a9c4e8]" : ""}`} />
          </button>
        ))}
      </div>
    </nav>
  );
}

/* ---------- window ---------- */

export default function App() {
  const menu = ["File", "Edit", "Set", "View", "Draw", "Sketch", "Modify", "Window", "Help"];
  return (
    <div className="flex h-screen flex-col overflow-hidden bg-[#030303] font-['Open_Sans',sans-serif] text-[11px] text-[#222]">
      <div className="flex min-h-0 flex-1">
        <div className="w-3 shrink-0 border-l-2 border-black bg-linear-to-b from-[#1c4166] via-[#86b1d6] via-40% to-[#35322f]" />
        <div className="flex min-w-0 flex-1 flex-col border-l border-[#ddd] bg-white">
          <header className="flex h-[22px] shrink-0 items-center pl-px pr-0.5">
            <GeoLogo size="size-[15px]" />
            <h1 className="ml-1">EJEMPLO 3.1.gsz* - GeoStudio 2012 (SLOPE/W Results)</h1>
            <div className="ml-auto flex">
              {[["Minimise", "M0 5.500H10"], ["Restore", "M.500 3H7.500V9.500H.500ZM2.500 3V.800H9.500V7.500H7.500"], ["Close", "M.500 .500L9.500 9.500M9.500 .500L.500 9.500"]].map(([l, d]) => (
                <button key={l} type="button" aria-label={l} className="flex h-5 w-[42px] items-center justify-center">
                  <svg viewBox="0 0 10 10" className="size-2.5" fill="none" stroke="#222" aria-hidden="true"><path d={d} /></svg>
                </button>
              ))}
            </div>
          </header>
          <nav aria-label="Menu" className="flex h-[25px] shrink-0 items-center border-b border-[#c4c4c4]">
            <Grip />
            <div className="ml-1.5 flex gap-[13px]">
              {menu.map((m) => <button key={m} type="button">{m}</button>)}
            </div>
          </nav>
          <Toolbars />
          <div className="flex min-h-0 flex-1">
            <Sidebar />
            <Viewport />
            <ViewBar />
          </div>
          <StatusBar />
        </div>
      </div>
      <Taskbar />
    </div>
  );
}
